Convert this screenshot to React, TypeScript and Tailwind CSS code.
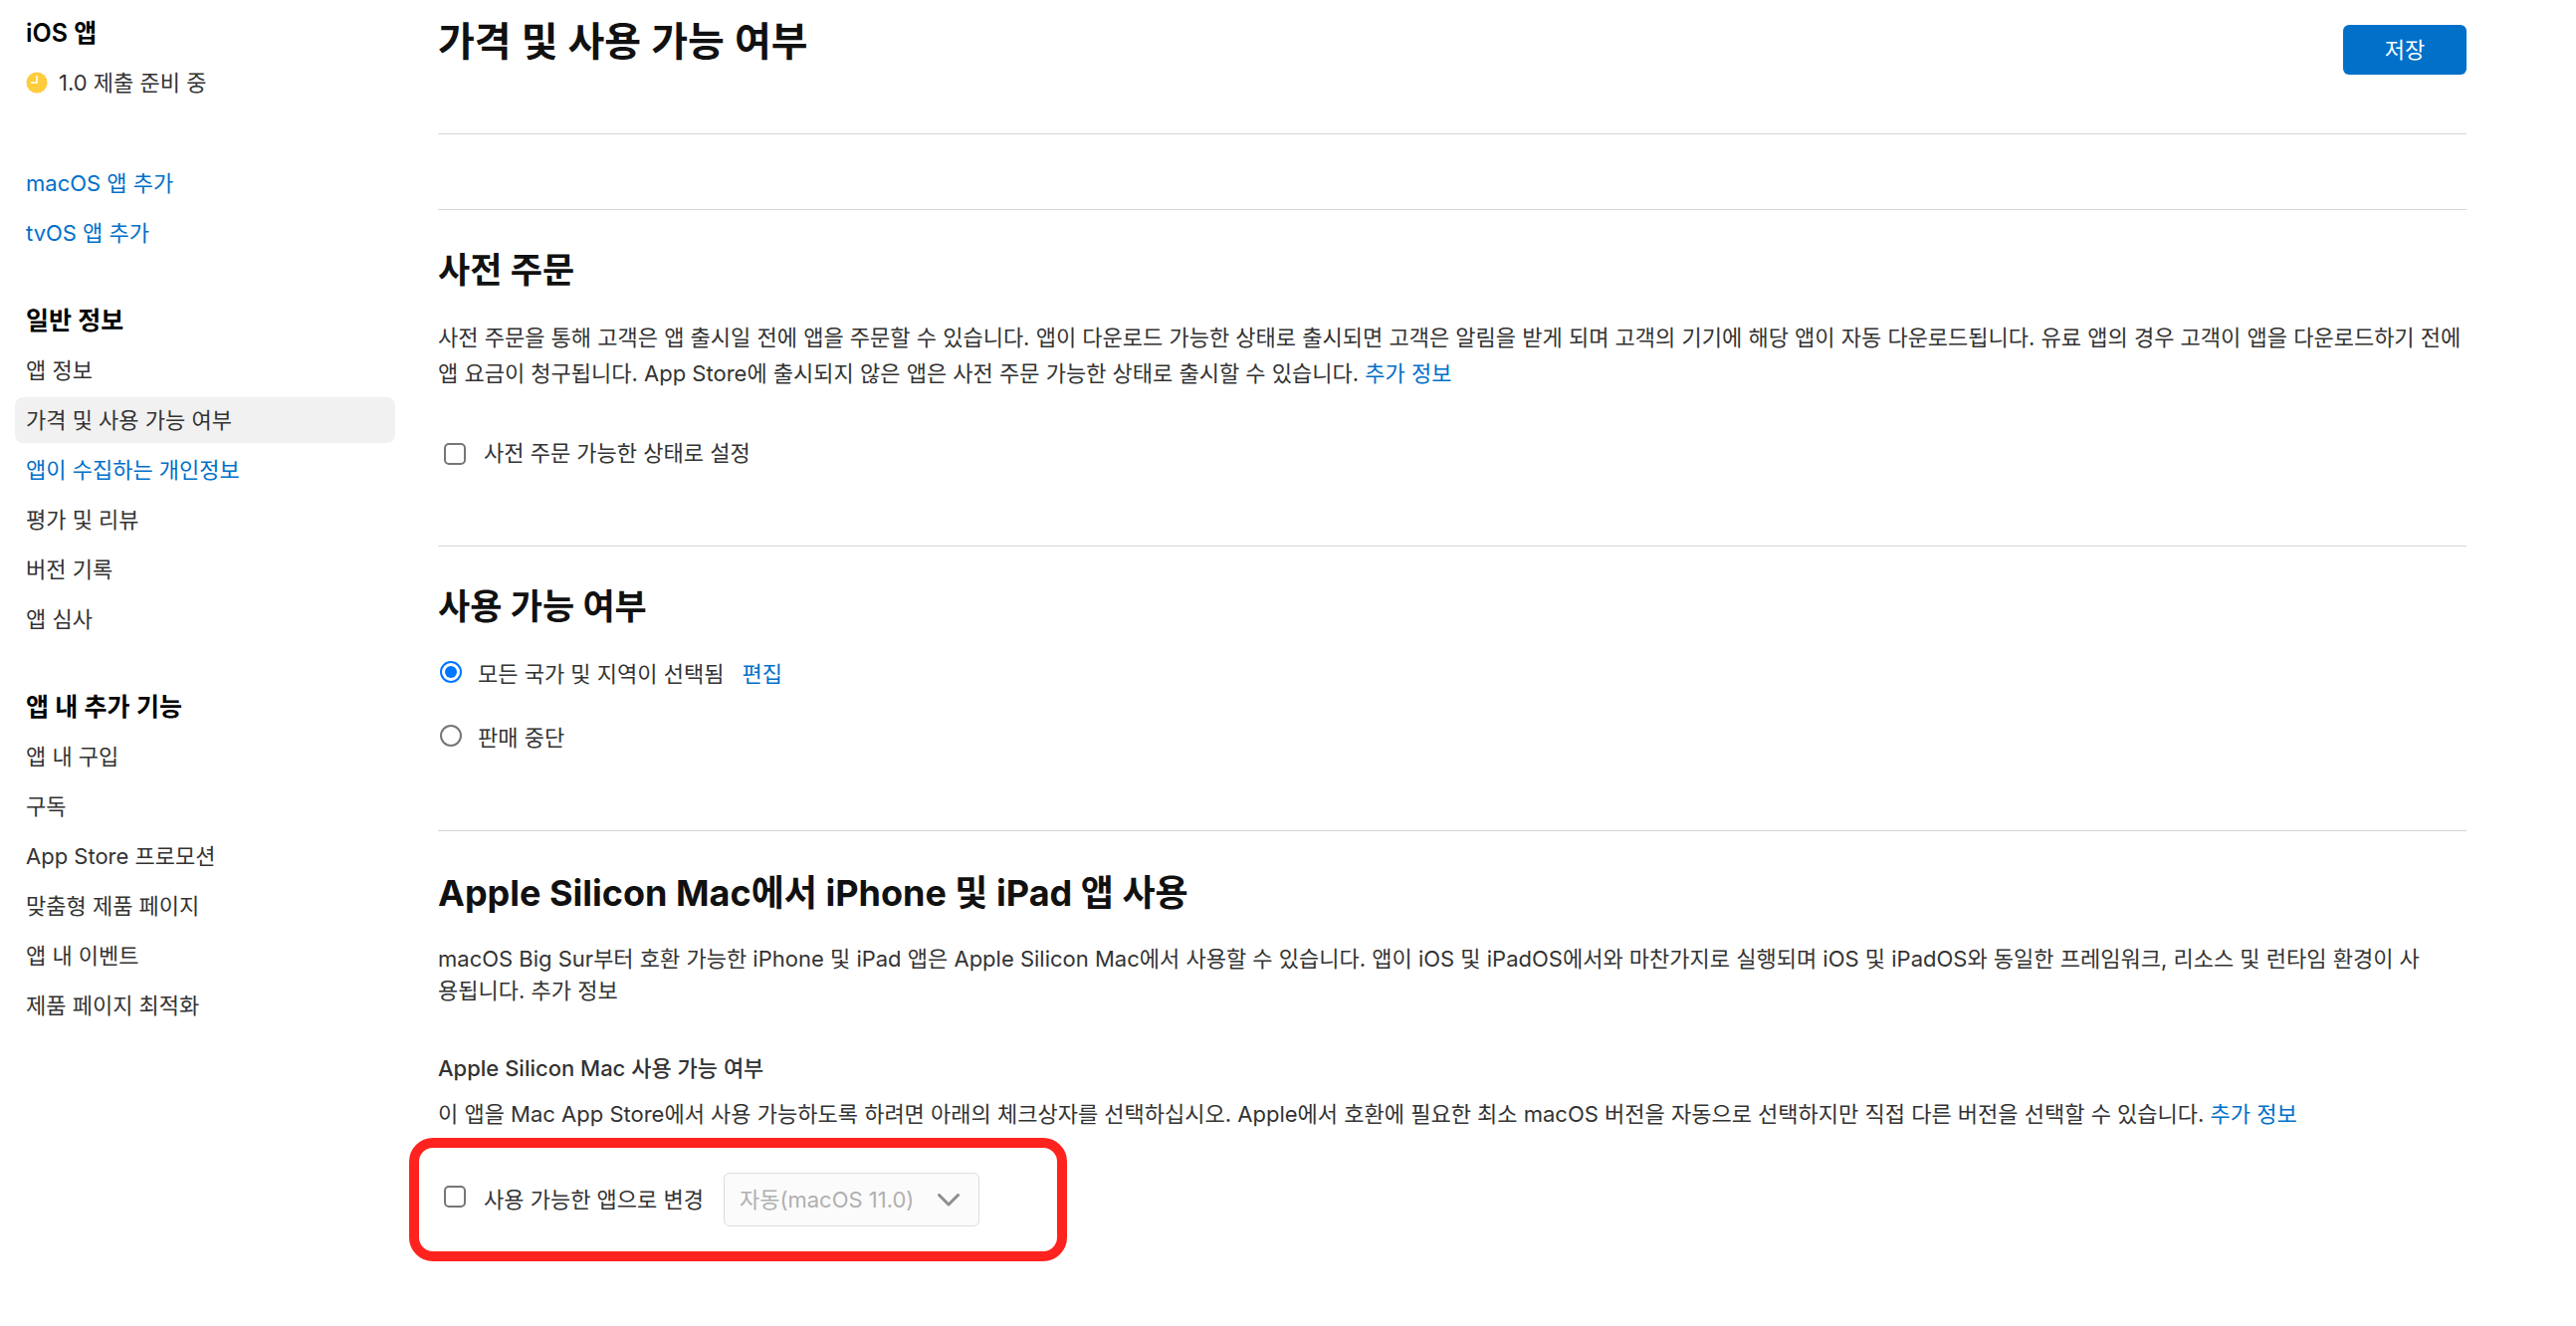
import React, { useState } from 'react';

type NavItem = {
    label: string;
    active?: boolean;
    link?: boolean;
};

const generalItems: NavItem[] = [
    { label: '앱 정보' },
    { label: '가격 및 사용 가능 여부', active: true },
    { label: '앱이 수집하는 개인정보', link: true },
    { label: '평가 및 리뷰' },
    { label: '버전 기록' },
    { label: '앱 심사' },
];

const featureItems: NavItem[] = [
    { label: '앱 내 구입' },
    { label: '구독' },
    { label: 'App Store 프로모션' },
    { label: '맞춤형 제품 페이지' },
    { label: '앱 내 이벤트' },
    { label: '제품 페이지 최적화' },
];

const checkboxClass =
    'size-[22px] shrink-0 appearance-none rounded-[5px] border-2 border-[#767676] bg-white checked:border-[#0075ff] checked:bg-[#0075ff]';
const radioClass =
    'mb-1 size-[22px] shrink-0 appearance-none rounded-full border-2 border-[#767676] bg-white bg-clip-content p-[3px] checked:border-[#0075ff] checked:bg-[#0075ff]';

const ClockIcon = () => (
    <svg className="size-[22px] shrink-0" viewBox="0 0 22 22" aria-hidden="true">
        <circle cx="11" cy="11" r="10.5" fill="#ffcc3e" />
        <path d="M11 4.5V11H5.5" fill="none" stroke="#fff" strokeWidth="1.6" strokeLinecap="round" />
    </svg>
);

const NavGroup = ({ title, items }: { title: string; items: NavItem[] }) => (
    <section className="mt-[38px]">
        <h2 className="px-[11px] text-[25px] leading-[50px] font-semibold text-black">{title}</h2>
        <ul>
            {items.map((item) => (
                <li key={item.label} className="py-0.5">
                    <a
                        href="#"
                        className={
                            item.active
                                ? 'block rounded-lg bg-[#f1f1f1] px-[11px] leading-[46px]'
                                : item.link
                                    ? 'block px-[11px] leading-[46px] text-[#0070c9]'
                                    : 'block px-[11px] leading-[46px]'
                        }
                    >
                        {item.label}
                    </a>
                </li>
            ))}
        </ul>
    </section>
);

const Sidebar = () => (
    <nav className="w-[397px] shrink-0 pt-2 pl-[15px]">
        <h2 className="px-[11px] text-[25px] leading-[50px] font-semibold text-black">iOS 앱</h2>
        <a href="#" className="flex items-center gap-[11px] px-[11px] leading-[50px]">
            <ClockIcon />
            1.0 제출 준비 중
        </a>
        <div className="mt-[51px] flex flex-col px-[11px] leading-[50px] text-[#0070c9]">
            <a href="#">macOS 앱 추가</a>
            <a href="#">tvOS 앱 추가</a>
        </div>
        <NavGroup title="일반 정보" items={generalItems} />
        <NavGroup title="앱 내 추가 기능" items={featureItems} />
    </nav>
);

const App = () => {
    const [preorder, setPreorder] = useState<boolean>(false);
    const [available, setAvailable] = useState<boolean>(false);
    const [territory, setTerritory] = useState<string>('all');

    return (
        <div className="flex min-h-screen bg-white font-['Inter','Noto_Sans_CJK_KR',sans-serif] text-[22px] text-[#333]">
            <Sidebar />
            <main className="mr-[110px] ml-[43px] flex-1">
                <header className="flex h-[135px] items-start justify-between border-b border-[#d6d6d6]">
                    <h1 className="pt-[18px] text-[40px] leading-[48px] font-semibold text-[#111]">가격 및 사용 가능 여부</h1>
                    <button className="mt-[25px] h-[50px] w-[124px] rounded-md bg-[#0070c9] text-white">저장</button>
                </header>
                <div className="h-[76px] border-b border-[#d6d6d6]" />

                <section className="border-b border-[#d6d6d6] pt-[38px] pb-[76px]">
                    <h2 className="text-[35px] leading-[44px] font-bold text-[#111]">사전 주문</h2>
                    <p className="mt-7 leading-9 break-keep">
                        사전 주문을 통해 고객은 앱 출시일 전에 앱을 주문할 수 있습니다. 앱이 다운로드 가능한 상태로 출시되면 고객은 알림을 받게 되며 고객의 기기에 해당 앱이 자동 다운로드됩니다. 유료 앱의 경우 고객이 앱을 다운로드하기 전에
                        <br />
                        앱 요금이 청구됩니다. App Store에 출시되지 않은 앱은 사전 주문 가능한 상태로 출시할 수 있습니다.{' '}
                        <a href="#" className="text-[#0070c9]">추가 정보</a>
                    </p>
                    <div className="mt-[46px] flex items-center">
                        <label className="flex items-center gap-[18px] pl-1.5">
                            <input type="checkbox" className={checkboxClass} checked={preorder} onChange={(e) => setPreorder(e.target.checked)} />
                            사전 주문 가능한 상태로 설정
                        </label>
                    </div>
                </section>

                <section className="border-b border-[#d6d6d6] pt-[38px] pb-[75px]">
                    <h2 className="text-[35px] leading-[44px] font-bold text-[#111]">사용 가능 여부</h2>
                    <div className="mt-7 flex items-center gap-[18px] leading-9">
                        <label className="flex items-center gap-4 pl-0.5">
                            <input type="radio" name="territory" className={radioClass} checked={territory === 'all'} onChange={() => setTerritory('all')} />
                            모든 국가 및 지역이 선택됨
                        </label>
                        <a href="#" className="text-[#0070c9]">편집</a>
                    </div>
                    <div className="mt-7 flex items-center leading-9">
                        <label className="flex items-center gap-4 pl-0.5">
                            <input type="radio" name="territory" className={radioClass} checked={territory === 'none'} onChange={() => setTerritory('none')} />
                            판매 중단
                        </label>
                    </div>
                </section>

                <section className="pt-10">
                    <h2 className="text-[36px] leading-[44px] font-bold text-[#111]">Apple Silicon Mac에서 iPhone 및 iPad 앱 사용</h2>
                    <p className="mt-7 leading-8">
                        macOS Big Sur부터 호환 가능한 iPhone 및 iPad 앱은 Apple Silicon Mac에서 사용할 수 있습니다. 앱이 iOS 및 iPadOS에서와 마찬가지로 실행되며 iOS 및 iPadOS와 동일한 프레임워크, 리소스 및 런타임 환경이 사
                        <br />
                        용됩니다. 추가 정보
                    </p>
                    <h3 className="mt-11 leading-9 font-medium">Apple Silicon Mac 사용 가능 여부</h3>
                    <p className="mt-2.5 leading-9">
                        이 앱을 Mac App Store에서 사용 가능하도록 하려면 아래의 체크상자를 선택하십시오. Apple에서 호환에 필요한 최소 macOS 버전을 자동으로 선택하지만 직접 다른 버전을 선택할 수 있습니다.{' '}
                        <a href="#" className="text-[#0070c9]">추가 정보</a>
                    </p>

                    {/* highlighted row */}
                    <div className="mt-1.5 -ml-[29px] flex h-[124px] w-[661px] items-center gap-5 rounded-3xl border-10 border-[#ff231f] pl-[25px]">
                        <label className="flex items-center gap-[18px]">
                            <input type="checkbox" className={`mb-1.5 ${checkboxClass}`} checked={available} onChange={(e) => setAvailable(e.target.checked)} />
                            사용 가능한 앱으로 변경
                        </label>
                        <div className="relative">
                            <select
                                disabled
                                aria-label="macOS 버전"
                                className="h-[54px] w-[257px] appearance-none rounded-md border border-[#dcdcdc] bg-[#fbfbfb] pl-[15px] text-[#b0b0b0] opacity-100"
                            >
                                <option>자동(macOS 11.0)</option>
                            </select>
                            <svg className="pointer-events-none absolute top-[21px] right-5 h-[13px] w-[22px]" viewBox="0 0 22 13" fill="none" aria-hidden="true">
                                <path d="M1.5 1.5l9.5 9.5 9.5-9.5" stroke="#8e8e8e" strokeWidth="3" strokeLinecap="round" strokeLinejoin="round" />
                            </svg>
                        </div>
                    </div>
                </section>
            </main>
        </div>
    );
};

export default App;
